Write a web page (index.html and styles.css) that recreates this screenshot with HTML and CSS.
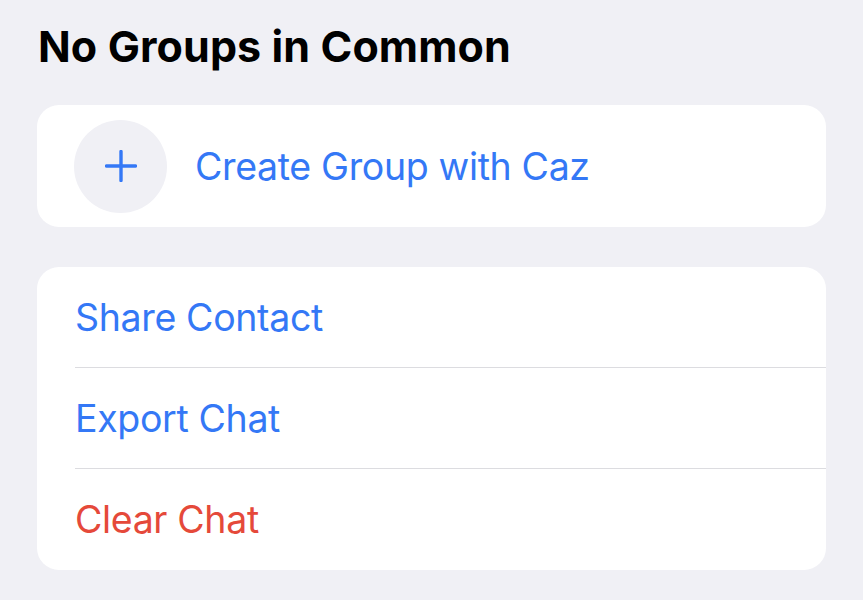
FILE: index.html
```html
<!DOCTYPE html>
<html lang="en">
<head>
    <meta charset="UTF-8">
    <meta name="viewport" content="width=device-width, initial-scale=1.0">
    <title>Contact Info</title>
    <link rel="stylesheet" href="styles.css">
</head>
<body>

    <!-- Groups section -->
    <div class="section">
        <h2 class="section-title">No Groups in Common</h2>
        <div class="card">
            <div class="group-row">
                <div class="add-circle">
                    <svg width="32" height="32" viewBox="0 0 32 32">
                        <path d="M16 1.5V30.5M1.5 16H30.5" stroke="#3478f6" stroke-width="3.4" stroke-linecap="round" fill="none"/>
                    </svg>
                </div>
                <span class="link">Create Group with Caz</span>
            </div>
        </div>
    </div>

    <!-- Actions -->
    <div class="card actions">
        <div class="action-row"><span class="link">Share Contact</span></div>
        <div class="action-row"><span class="link">Export Chat</span></div>
        <div class="action-row"><span class="danger">Clear Chat</span></div>
    </div>

</body>
</html>
```

FILE: styles.css
```css
body { margin: 0; padding: 0 37px; background: #f0f0f5; font-family: Inter, "Liberation Sans", sans-serif; }

/* Section header */
.section-title { margin: 0; padding: 20px 0 0 1px; height: 105px; box-sizing: border-box; font-size: 43px; font-weight: 700; color: #000; letter-spacing: 0.1px; }

/* Cards */
.card { background: #fff; border-radius: 22px; overflow: hidden; }
.group-row { display: flex; align-items: center; gap: 28px; padding: 14px 37px; height: 122px; box-sizing: border-box; }
.add-circle { width: 93px; height: 93px; border-radius: 50%; background: #f0f0f5; display: flex; align-items: center; justify-content: center; flex-shrink: 0; }

.actions { margin-top: 40px; }
.action-row { height: 101px; margin-left: 38px; display: flex; align-items: center; border-bottom: 1.5px solid #dcdce0; box-sizing: border-box; }
.action-row:last-child { border-bottom: none; }

.link, .danger { font-size: 37.5px; letter-spacing: -0.35px; }
.link { color: #3478f6; }
.danger { color: #e5493a; }
```
